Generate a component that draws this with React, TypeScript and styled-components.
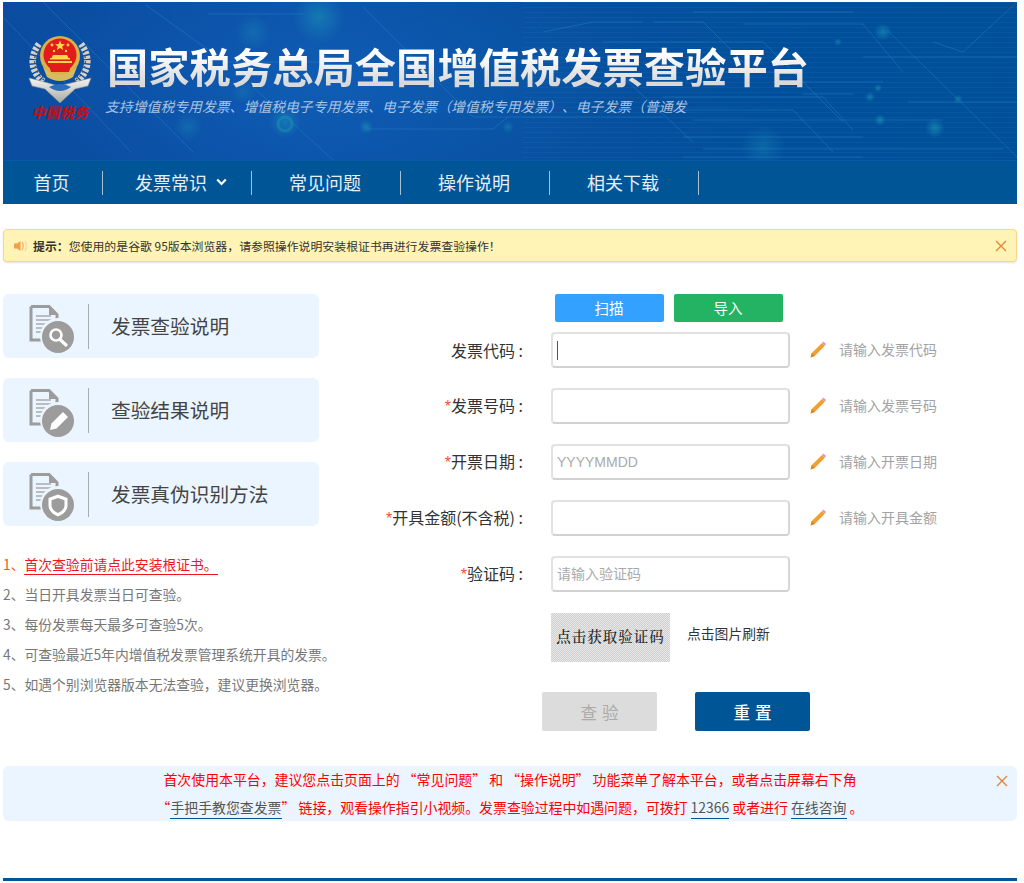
import React from "react";
import styled, { createGlobalStyle } from "styled-components";

const Global = createGlobalStyle`
  html, body { margin: 0; padding: 0; background: #fff; }
  body { font-family: "Noto Sans CJK SC", "Liberation Sans", sans-serif; text-spacing-trim: space-all; }
  * { box-sizing: border-box; }
`;

const Page = styled.div`
  width: 1014px;
  margin-left: 3px;
  padding-top: 2px;
`;

const Banner = styled.header`
  position: relative;
  height: 158px;
  display: flex;
  align-items: flex-start;
  padding: 33px 0 0 25px;
  overflow: hidden;
  background: linear-gradient(90deg, #0a4da0 0%, #0a51a8 30%, #07509f 55%, #004f9b 80%, #004f98 100%);
`;

const BannerArt = styled.svg`
  position: absolute;
  inset: 0;
  width: 1014px;
  height: 158px;
`;

const LogoBlock = styled.div`
  position: relative;
  width: 64px;
  display: flex;
  flex-direction: column;
  align-items: center;
`;

const Seal = styled.span`
  margin-top: -3px;
  font-size: 14px;
  line-height: 20px;
  font-weight: 900;
  font-style: italic;
  letter-spacing: 0.2px;
  white-space: nowrap;
  color: #b9131a;
`;

const TitleBlock = styled.div`
  position: relative;
  margin-left: 15px;
`;

const Title = styled.h1`
  margin: 0;
  font-size: 41.3px;
  line-height: 60px;
  font-weight: 700;
  white-space: nowrap;
  background: linear-gradient(180deg, #ffffff 30%, #d9d9d9 80%);
  -webkit-background-clip: text;
  background-clip: text;
  color: transparent;
`;

const Subtitle = styled.p`
  margin: 1px 0 0 -2px;
  font-size: 13.85px;
  line-height: 20px;
  font-style: italic;
  white-space: nowrap;
  color: #a9c3e2;
`;

const Nav = styled.nav`
  height: 44px;
  display: flex;
  align-items: center;
  background: #005596;
  border-top: 1px solid #0a58a6;
`;

const NavItem = styled.a<{ $first?: boolean; $menu?: boolean }>`
  width: ${(p) => (p.$first ? 100 : 149)}px;
  height: 24px;
  display: flex;
  align-items: center;
  justify-content: center;
  gap: 9px;
  padding: 0 2px 2px ${(p) => (p.$menu ? 10 : 0)}px;
  font-size: 18px;
  line-height: 22px;
  color: #e6eef6;
  border-right: 1px solid #a9bfd3;
`;

const Notice = styled.div`
  margin-top: 25px;
  height: 33px;
  display: flex;
  align-items: center;
  padding: 0 9px 0 10px;
  background: #fff4b5;
  border: 1px solid #f5d88a;
  border-radius: 4px;
  box-shadow: 0 1px 2px rgba(0, 0, 0, 0.12);
  font-size: 11.9px;
  color: #333;
`;

const NoticeStrong = styled.strong`
  margin-left: 5px;
  font-weight: 700;
  white-space: nowrap;
`;

const NoticeText = styled.span`
  flex: 1;
  white-space: nowrap;
`;

const Main = styled.main`
  margin-top: 32px;
  display: grid;
  grid-template-columns: 316px 1fr;
`;

const LeftCol = styled.div`
  display: flex;
  flex-direction: column;
`;

const Card = styled.a`
  height: 64px;
  margin-bottom: 20px;
  display: flex;
  align-items: center;
  padding-left: 26px;
  background: #ebf5ff;
  border-radius: 6px;
`;

const CardIcon = styled.svg`
  width: 46px;
  height: 48px;
  margin-top: 6px;
  flex: none;
`;

const CardRule = styled.span`
  width: 1px;
  height: 45px;
  margin: 0 22px 0 13px;
  background: #a8adb2;
`;

const CardText = styled.span`
  font-size: 19.7px;
  line-height: 28px;
  color: #444;
`;

const Tips = styled.ol`
  list-style: none;
  margin: 3px 0 0;
  padding: 0;
`;

const Tip = styled.li<{ $first?: boolean }>`
  height: 30px;
  font-size: 13.8px;
  line-height: 30px;
  white-space: nowrap;
  color: ${(p) => (p.$first ? "#f2590c" : "#777")};
`;

const TipLink = styled.a`
  color: #f0151f;
  border-bottom: 1px solid #f0151f;
`;

const FormCol = styled.form`
  display: flex;
  flex-direction: column;
  margin: 0;
`;

const TopButtons = styled.div`
  display: flex;
  gap: 10px;
  margin: 0 0 10px 236px;
`;

const TopButton = styled.button<{ $bg: string }>`
  width: 109px;
  height: 28px;
  padding: 0 1px 2px 0;
  border: 0;
  border-radius: 2px;
  background: ${(p) => p.$bg};
  color: #fff;
  font: 14.5px "Noto Sans CJK SC", sans-serif;
`;

const Row = styled.div`
  display: flex;
  align-items: center;
  height: 36px;
  margin-bottom: 20px;
`;

const Label = styled.label`
  width: 204px;
  flex: none;
  text-align: right;
  font-size: 16px;
  line-height: 24px;
  white-space: nowrap;
  color: #333;
`;

const Star = styled.i`
  font-style: normal;
  color: #f6502c;
  font-family: "Liberation Sans", sans-serif;
`;

const InputWrap = styled.span`
  position: relative;
  margin-left: 28px;
  width: 239px;
  height: 36px;
  flex: none;
`;

const Field = styled.input`
  width: 100%;
  height: 100%;
  padding: 0 4px;
  border: 2px solid #e2e2e2;
  border-bottom-color: #d2d2d2;
  border-right-color: #d8d8d8;
  border-radius: 4px;
  outline: none;
  font: 14px "Liberation Sans", "Noto Sans CJK SC", sans-serif;
  &::placeholder { color: #aaa; opacity: 1; }
`;

const Caret = styled.span`
  position: absolute;
  left: 6px;
  top: 9px;
  width: 1px;
  height: 19px;
  background: #555;
`;

const Hint = styled.span`
  margin: -2px 0 0 20px;
  display: flex;
  align-items: center;
  gap: 13px;
  font-size: 14px;
  line-height: 20px;
  white-space: nowrap;
  color: #a3a3a3;
`;

const CaptchaRow = styled.div`
  display: flex;
  align-items: center;
  margin: 1px 0 30px 232px;
`;

const Captcha = styled.div`
  width: 119px;
  height: 49px;
  display: flex;
  align-items: center;
  justify-content: center;
  padding-bottom: 4px;
  background: repeating-conic-gradient(#cfcfcf 0 25%, #e8e8e8 0 50%) 0 0 / 2px 2px;
  font-family: "Noto Serif CJK SC", "Liberation Serif", "Noto Sans CJK SC", serif;
  font-size: 14.5px;
  font-weight: 500;
  letter-spacing: 1px;
  white-space: nowrap;
  color: #222;
`;

const Refresh = styled.span`
  margin: -10px 0 0 17px;
  font-size: 13.8px;
  line-height: 20px;
  color: #333;
`;

const Actions = styled.div`
  display: flex;
  gap: 38px;
  margin-left: 223px;
`;

const ActionButton = styled.button<{ $primary?: boolean }>`
  width: 115px;
  height: 39px;
  padding: 0 0 0 5px;
  border: 0;
  border-radius: 2px;
  background: ${(p) => (p.$primary ? "#005596" : "#dcdcdc")};
  color: ${(p) => (p.$primary ? "#fff" : "#aaa")};
  font: ${(p) => (p.$primary ? 500 : 400)} 16.5px "Noto Sans CJK SC", sans-serif;
  letter-spacing: 5px;
`;

const Advice = styled.section`
  position: relative;
  margin-top: 35px;
  height: 55px;
  background: #ebf5ff;
  border-radius: 6px;
  text-align: center;
  font-size: 13.9px;
  color: #f00;
`;

const AdviceLine = styled.div`
  height: 28px;
  line-height: 26px;
  white-space: nowrap;
`;

const AdviceLink = styled.a`
  color: #555;
  border-bottom: 1px solid #005596;
  padding-bottom: 1px;
`;

const AdviceClose = styled.svg`
  position: absolute;
  right: 9px;
  top: 9px;
  width: 12px;
  height: 12px;
`;

const CloseIcon = styled.svg`
  width: 12px;
  height: 12px;
  flex: none;
`;

const FooterBar = styled.div`
  margin-top: 57px;
  height: 3px;
  background: #005596;
`;

const traces: string[] = [
  "0,15 128,150", "40,0 190,150", "143,3 222,60 330,60", "205,12 300,12", "360,5 470,115 660,115",
  "363,127 490,127 505,115", "250,85 330,158", "650,20 700,20 740,60", "690,10 850,10", "740,22 860,22 900,70",
  "660,95 820,95 850,128", "665,108 790,108 830,150", "690,118 940,118", "680,135 860,135", "700,147 1000,147",
  "680,155 860,155", "884,28 1014,155", "1014,0 960,50 930,40", "600,40 760,40 800,80", "770,80 880,80",
  "800,92 850,92", "720,70 790,70 840,120", "540,30 590,20 640,20", "620,75 690,140", "860,55 1014,55",
  "905,100 1014,100",
];

const glows: [number, number, number, number][] = [
  [316, 15, 26, 0.5], [250, 30, 18, 0.3], [282, 120, 16, 0.45], [185, 125, 14, 0.3], [363, 125, 7, 0.55],
  [240, 90, 12, 0.25], [505, 125, 6, 0.4], [880, 30, 9, 0.55], [932, 126, 10, 0.6], [877, 118, 6, 0.6],
  [867, 95, 5, 0.6], [875, 86, 4, 0.6], [835, 40, 4, 0.5], [955, 97, 5, 0.5], [760, 145, 22, 0.3],
];

const Circuit = () => (
  <BannerArt viewBox="0 0 1014 158" aria-hidden>
    <defs>
      <radialGradient id="glow">
        <stop offset="0" stopColor="#1f9ab8" stopOpacity="1" />
        <stop offset="1" stopColor="#1f9ab8" stopOpacity="0" />
      </radialGradient>
      <radialGradient id="center">
        <stop offset="0" stopColor="#1a72cc" stopOpacity="0.35" />
        <stop offset="1" stopColor="#1a72cc" stopOpacity="0" />
      </radialGradient>
      <pattern id="hatch" width="4" height="5" patternUnits="userSpaceOnUse">
        <path d="M0 .5H4" stroke="#3a8fd0" strokeWidth="1" opacity=".1" />
      </pattern>
    </defs>
    <ellipse cx="330" cy="80" rx="300" ry="130" fill="url(#center)" />
    <rect x="520" y="0" width="494" height="158" fill="url(#hatch)" />
    {traces.map((t) => (
      <polyline key={t} points={t} fill="none" stroke="#2b88c8" strokeWidth="1" opacity="0.4" />
    ))}
    {glows.map(([x, y, r, o]) => (
      <circle key={`${x}-${y}`} cx={x} cy={y} r={r} fill="url(#glow)" opacity={o} />
    ))}
    <circle cx="282" cy="122" r="7" fill="none" stroke="#1a8fb0" strokeWidth="3" opacity="0.55" />
  </BannerArt>
);

const Emblem = () => (
  <svg width="64" height="70" viewBox="0 0 64 70" style={{ display: "block", position: "relative" }} aria-hidden>
    <defs>
      <linearGradient id="silver" x1="0" y1="0" x2="0" y2="1">
        <stop offset="0" stopColor="#f4f4f2" />
        <stop offset="1" stopColor="#a8a8a4" />
      </linearGradient>
    </defs>
    <g fill="none" stroke="#d2d2ce" strokeWidth="6.5" strokeDasharray="3 1.4">
      <path d="M11 9 C1 22 3 38 16 47" />
      <path d="M53 9 C63 22 61 38 48 47" />
    </g>
    <g fill="none" stroke="#4b4b47" strokeWidth="1.3" strokeDasharray="2 3">
      <path d="M11 12 C4 23 5 36 16 45" />
      <path d="M53 12 C60 23 59 36 48 45" />
    </g>
    <path d="M1 43 L13 46 L31 51 L51 46 L63 43 L60 51 L47 54 L32 68 L17 54 L4 51 Z" fill="url(#silver)" stroke="#8d8d88" strokeWidth=".6" />
    <path d="M21 52 Q32 46 43 52 Q32 60 21 52Z" fill="#2a6fb8" />
    <circle cx="32" cy="21" r="20" fill="#d9b24a" />
    <circle cx="32" cy="20" r="16.5" fill="#e21b1b" />
    <path d="M15 32 Q32 48 49 32 L45 42 Q32 50 19 42Z" fill="#d8bb5f" />
    <g fill="#ffd84a">
      <path d="M32 5.5l1.4 3.5 3.6.2-2.8 2.3 1 3.5-3.2-2-3.2 2 1-3.5-2.8-2.3 3.6-.2z" />
      <circle cx="24" cy="10" r="1.4" />
      <circle cx="40" cy="10" r="1.4" />
      <circle cx="26" cy="16" r="1.2" />
      <circle cx="38" cy="16" r="1.2" />
      <path d="M22 23h20v1.600H22zM25 20h14l1.500 3h-17zM20 26h24v2H20z" />
    </g>
    <path d="M21 30h22l-2 7H23z" fill="#e21b1b" />
  </svg>
);

const Chevron = () => (
  <svg width="11" height="8" viewBox="0 0 11 8" aria-hidden>
    <path d="M1.200 1.500 5.500 6 9.800 1.500" fill="none" stroke="#fff" strokeWidth="2.200" />
  </svg>
);

const Speaker = () => (
  <svg width="14" height="12" viewBox="0 0 14 12" style={{ flex: "none" }} aria-hidden>
    <path d="M0 3.500h3L6.500 1v10L3 8.500H0z" fill="#f2a04a" />
    <path d="M8 2q2.400 4 0 8" fill="none" stroke="#f7bd70" strokeWidth="1.600" />
    <path d="M11 1q3 5 0 10" fill="none" stroke="#fadaa6" strokeWidth="1.600" />
  </svg>
);

const Cross = ({ color }: { color: string }) => (
  <path d="M1 1 11 11M11 1 1 11" fill="none" stroke={color} strokeWidth="1.400" />
);

const Pencil = () => (
  <svg width="16" height="17" viewBox="0 0 16 17" style={{ flex: "none" }} aria-hidden>
    <path d="M.5 16.500 1.800 12 12 2 14.800 4.800 4.800 15z" fill="#f0a030" />
    <path d="M12 2 13.500.6l2.500 2.500-1.200 1.700z" fill="#d89ab8" />
    <path d="M.5 16.500 1.800 12l3 3z" fill="#c98a2a" />
  </svg>
);

const DocBase = () => (
  <g>
    <path d="M2 1.500h18l8 8V28M2 1.500V35h12" fill="none" stroke="#9c9c9c" strokeWidth="3" />
    <path d="M20 1v9h9z" fill="#9c9c9c" />
    <path d="M7 11h15M7 15h15M7 19h12M7 23h8M7 27h6" stroke="#aaa" strokeWidth="1.500" />
    <circle cx="29" cy="31" r="18" fill="#ebf5ff" />
    <circle cx="29" cy="32" r="16" fill="#9c9c9c" />
  </g>
);

type Glyph = "search" | "pen" | "shield";

const CardGlyph = ({ kind }: { kind: Glyph }) => (
  <CardIcon viewBox="0 0 46 48" aria-hidden>
    <DocBase />
    {kind === "search" && (
      <g fill="none" stroke="#fff">
        <circle cx="27" cy="30" r="5.500" strokeWidth="2.600" />
        <path d="M31 34.500 37 40" strokeWidth="3.200" strokeLinecap="round" />
      </g>
    )}
    {kind === "pen" && <path d="M21 41l1.500-6.500L34 23l5 5-11.500 11.500z" fill="#fff" />}
    {kind === "shield" && (
      <path d="M29 21.500l9.500 3.500v7c0 6-4.500 9.500-9.500 11.500-5-2-9.500-5.500-9.500-11.500v-7zM29 25l-6.500 2.300V32c0 4 3 6.500 6.500 8 3.500-1.500 6.500-4 6.500-8v-4.700z" fill="#fff" fillRule="evenodd" />
    )}
  </CardIcon>
);

const cards: { text: string; kind: Glyph }[] = [
  { text: "发票查验说明", kind: "search" },
  { text: "查验结果说明", kind: "pen" },
  { text: "发票真伪识别方法", kind: "shield" },
];

const fields = [
  { label: "发票代码", req: false, hint: "请输入发票代码", caret: true },
  { label: "发票号码", req: true, hint: "请输入发票号码" },
  { label: "开票日期", req: true, hint: "请输入开票日期", ph: "YYYYMMDD" },
  { label: "开具金额(不含税)", req: true, hint: "请输入开具金额" },
  { label: "验证码", req: true, ph: "请输入验证码" },
];

export default function App() {
  return (
    <Page>
      <Global />
      <Banner>
        <Circuit />
        <LogoBlock>
          <Emblem />
          <Seal>中国税务</Seal>
        </LogoBlock>
        <TitleBlock>
          <Title>国家税务总局全国增值税发票查验平台</Title>
          <Subtitle>支持增值税专用发票、增值税电子专用发票、电子发票（增值税专用发票）、电子发票（普通发</Subtitle>
        </TitleBlock>
      </Banner>
      <Nav>
        <NavItem $first>首页</NavItem>
        <NavItem $menu>发票常识<Chevron /></NavItem>
        <NavItem>常见问题</NavItem>
        <NavItem>操作说明</NavItem>
        <NavItem>相关下载</NavItem>
      </Nav>
      <Notice>
        <Speaker />
        <NoticeStrong>提示：</NoticeStrong>
        <NoticeText>您使用的是谷歌 95版本浏览器，请参照操作说明安装根证书再进行发票查验操作！</NoticeText>
        <CloseIcon viewBox="0 0 12 12" aria-hidden><Cross color="#e8843a" /></CloseIcon>
      </Notice>
      <Main>
        <LeftCol>
          {cards.map((c) => (
            <Card key={c.text}>
              <CardGlyph kind={c.kind} />
              <CardRule />
              <CardText>{c.text}</CardText>
            </Card>
          ))}
          <Tips>
            <Tip $first>1、<TipLink>首次查验前请点此安装根证书。</TipLink></Tip>
            <Tip>2、当日开具发票当日可查验。</Tip>
            <Tip>3、每份发票每天最多可查验5次。</Tip>
            <Tip>4、可查验最近5年内增值税发票管理系统开具的发票。</Tip>
            <Tip>5、如遇个别浏览器版本无法查验，建议更换浏览器。</Tip>
          </Tips>
        </LeftCol>
        <FormCol onSubmit={(e) => e.preventDefault()}>
          <TopButtons>
            <TopButton type="button" $bg="#33a1ff">扫描</TopButton>
            <TopButton type="button" $bg="#24b263">导入</TopButton>
          </TopButtons>
          {fields.map((f) => (
            <Row key={f.label}>
              <Label>
                {f.req && <Star>*</Star>}
                {f.label} :
              </Label>
              <InputWrap>
                <Field placeholder={f.ph} />
                {f.caret && <Caret />}
              </InputWrap>
              {f.hint && (
                <Hint>
                  <Pencil />
                  {f.hint}
                </Hint>
              )}
            </Row>
          ))}
          <CaptchaRow>
            <Captcha>点击获取验证码</Captcha>
            <Refresh>点击图片刷新</Refresh>
          </CaptchaRow>
          <Actions>
            <ActionButton type="button">查验</ActionButton>
            <ActionButton type="button" $primary>重置</ActionButton>
          </Actions>
        </FormCol>
      </Main>
      <Advice>
        <AdviceLine>首次使用本平台，建议您点击页面上的 “常见问题” 和 “操作说明” 功能菜单了解本平台，或者点击屏幕右下角</AdviceLine>
        <AdviceLine>
          “<AdviceLink>手把手教您查发票</AdviceLink>” 链接，观看操作指引小视频。发票查验过程中如遇问题，可拨打 <AdviceLink>12366</AdviceLink> 或者进行 <AdviceLink>在线咨询</AdviceLink> 。
        </AdviceLine>
        <AdviceClose viewBox="0 0 12 12" aria-hidden><Cross color="#e8843a" /></AdviceClose>
      </Advice>
      <FooterBar />
    </Page>
  );
}
